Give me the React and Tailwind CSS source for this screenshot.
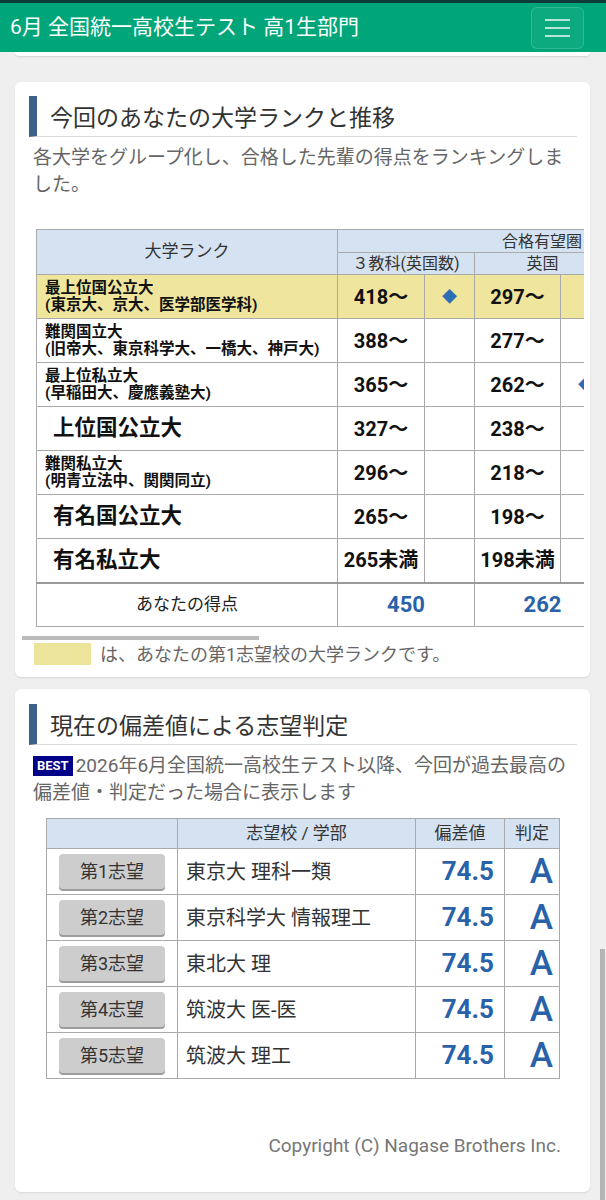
const ranks = [
  { name: "最上位国公立大", sub: "(東京大、京大、医学部医学科)", a: "418〜", b: "297〜", c: "301〜", markA: true, hl: true },
  { name: "難関国立大", sub: "(旧帝大、東京科学大、一橋大、神戸大)", a: "388〜", b: "277〜", c: "281〜" },
  { name: "最上位私立大", sub: "(早稲田大、慶應義塾大)", a: "365〜", b: "262〜", c: "266〜", markB: true },
  { name: "上位国公立大", a: "327〜", b: "238〜", c: "241〜" },
  { name: "難関私立大", sub: "(明青立法中、関関同立)", a: "296〜", b: "218〜", c: "220〜", markC: true },
  { name: "有名国公立大", a: "265〜", b: "198〜", c: "199〜" },
  { name: "有名私立大", a: "265未満", b: "198未満", c: "199未満" },
];

const choices = [
  { no: "第1志望", school: "東京大 理科一類", dev: "74.5", judge: "A" },
  { no: "第2志望", school: "東京科学大 情報理工", dev: "74.5", judge: "A" },
  { no: "第3志望", school: "東北大 理", dev: "74.5", judge: "A" },
  { no: "第4志望", school: "筑波大 医-医", dev: "74.5", judge: "A" },
  { no: "第5志望", school: "筑波大 理工", dev: "74.5", judge: "A" },
];

function Heading({ children }) {
  return (
    <div className="h-[41px] border-l-8 border-l-[#3e6189] border-b border-b-[#dcdcdc] flex items-center pl-[13px] pt-[6px] text-[23px] text-[#333]">
      {children}
    </div>
  );
}

function Mark({ on }) {
  return on ? <span className="text-[15px] text-[#2d6db5]">◆</span> : null;
}

function RankTable() {
  const cell = "border border-[#aaa] h-[44px] p-0";
  const num = cell + " text-center text-[20px] font-bold";
  const th = "border border-[#aaa] font-normal text-[16px] leading-[21px] p-0";
  return (
    <table className="ml-[14px] border-collapse table-fixed w-[709px] text-[#111]">
      <colgroup>
        <col className="w-[301px]" />
        <col className="w-[87px]" />
        <col className="w-[50px]" />
        <col className="w-[86px]" />
        <col className="w-[50px]" />
        <col className="w-[86px]" />
        <col className="w-[50px]" />
      </colgroup>
      <thead className="bg-[#d5e2f1] text-[#333]">
        <tr>
          <th rowSpan={2} className="border border-[#aaa] font-normal text-[17px] p-0">大学ランク</th>
          <th colSpan={6} className={th + " h-[23px]"}>合格有望圏</th>
        </tr>
        <tr>
          <th colSpan={2} className={th + " h-[22px]"}>３教科(英国数)</th>
          <th colSpan={2} className={th + " h-[22px]"}>英国</th>
          <th colSpan={2} className={th + " h-[22px]"}>英数</th>
        </tr>
      </thead>
      <tbody>
        {ranks.map((r, i) => (
          <tr key={r.name} className={r.hl ? "bg-[#efe59c]" : "bg-white"}>
            <td className={cell + " font-bold text-left" + (i === 0 ? " h-[43px]" : "")}>
              {r.sub ? (
                <div className="pl-2 text-[15.5px] leading-[17px]">
                  <div>{r.name}</div>
                  <div>{r.sub}</div>
                </div>
              ) : (
                <div className="pl-4 text-[21.5px]">{r.name}</div>
              )}
            </td>
            <td className={num}>{r.a}</td>
            <td className={cell + " text-center"}><Mark on={r.markA} /></td>
            <td className={num}>{r.b}</td>
            <td className={cell + " text-center"}><Mark on={r.markB} /></td>
            <td className={num}>{r.c}</td>
            <td className={cell + " text-center"}><Mark on={r.markC} /></td>
          </tr>
        ))}
        <tr className="bg-white">
          <td className="border border-[#aaa] border-t-2 border-t-[#999] h-[44px] text-center text-[17px] text-[#222]">あなたの得点</td>
          <td colSpan={2} className="border border-[#aaa] border-t-2 border-t-[#999] text-center text-[22px] font-bold text-[#2a62a9]">450</td>
          <td colSpan={2} className="border border-[#aaa] border-t-2 border-t-[#999] text-center text-[22px] font-bold text-[#2a62a9]">262</td>
          <td colSpan={2} className="border border-[#aaa] border-t-2 border-t-[#999] text-center text-[22px] font-bold text-[#2a62a9]">188</td>
        </tr>
      </tbody>
    </table>
  );
}

function ChoiceTable() {
  const cell = "border border-[#aaa] h-[46px] p-0";
  return (
    <table className="mx-auto w-[513px] border-collapse table-fixed">
      <colgroup>
        <col className="w-[131px]" />
        <col className="w-[238px]" />
        <col className="w-[89px]" />
        <col className="w-[55px]" />
      </colgroup>
      <thead className="bg-[#d5e2f1] text-[#333]">
        <tr>
          <th className="border border-[#aaa] h-[30px] p-0"></th>
          <th className="border border-[#aaa] font-normal text-[17px] p-0">志望校 / 学部</th>
          <th className="border border-[#aaa] font-normal text-[17px] p-0">偏差値</th>
          <th className="border border-[#aaa] font-normal text-[17px] p-0">判定</th>
        </tr>
      </thead>
      <tbody>
        {choices.map((c) => (
          <tr key={c.no}>
            <td className={cell}>
              <div className="mx-auto w-[106px] h-[35px] rounded-[4px] bg-[#cdcdcd] shadow-[0_2px_0_#9c9c9c] flex items-center justify-center text-[18px] text-[#333]">
                {c.no}
              </div>
            </td>
            <td className={cell + " pl-2 text-[20px] text-[#333]"}>{c.school}</td>
            <td className={cell + " pr-[10px] text-right text-[26px] font-bold text-[#2a62a9]"}>{c.dev}</td>
            <td className={cell + " pr-[6px] text-right text-[35px] font-medium text-[#2a62a9] leading-none"}>{c.judge}</td>
          </tr>
        ))}
      </tbody>
    </table>
  );
}

export default function App() {
  return (
    <div className="h-[1200px] overflow-hidden bg-[#efefef] font-[Roboto,'Noto_Sans_CJK_JP',sans-serif]">
      <div className="h-[3px] bg-[#0d3b3a]" />
      <div className="h-[49px] bg-[#00a67a] flex items-center justify-between pl-[10px] pr-[22px]">
        <div className="text-[21px] text-white">6月 全国統一高校生テスト 高1生部門</div>
        <div className="w-[53px] h-[42px] rounded-md border border-white/15 bg-white/5 flex flex-col items-center justify-center gap-[6px]">
          <span className="w-[25px] h-[2px] bg-white/70" />
          <span className="w-[25px] h-[2px] bg-white/70" />
          <span className="w-[25px] h-[2px] bg-white/70" />
        </div>
      </div>
      <div className="ml-[15px] mr-[16px] h-[4px] bg-white rounded-b-md shadow-[0_1px_2px_rgba(0,0,0,0.12)]" />

      <section className="mt-[26px] ml-[15px] mr-[16px] bg-white rounded-md shadow-[0_1px_2px_rgba(0,0,0,0.1)] pt-[14px] pl-[14px] pr-[13px] pb-[12px]">
        <Heading>今回のあなたの大学ランクと推移</Heading>
        <p className="mt-[7px] pl-1 text-[19px] leading-[27px] text-[#666]">
          各大学をグループ化し、合格した先輩の得点をランキングしました。
        </p>
        <div className="mt-[31px] -mx-[7px] overflow-hidden">
          <RankTable />
        </div>
        <div className="mt-[9px] -ml-[7px] w-[237px] h-[4px] bg-[#bbb]" />
        <div className="mt-[3px] h-[22px] flex items-center pl-[5px]">
          <span className="w-[57px] h-[22px] bg-[#ece49a]" />
          <span className="ml-[9px] text-[18px] text-[#666]">は、あなたの第1志望校の大学ランクです。</span>
        </div>
      </section>

      <section className="mt-[12px] ml-[15px] mr-[16px] bg-white rounded-md shadow-[0_1px_2px_rgba(0,0,0,0.1)] pt-[15px] pl-[14px] pr-[13px] pb-[33px]">
        <Heading>現在の偏差値による志望判定</Heading>
        <p className="mt-[7px] pl-1 text-[19px] leading-[27px] text-[#666]">
          <span className="inline-block h-[20px] leading-[20px] px-[4px] mr-[3px] bg-[#000088] text-white text-[13px] font-bold align-middle relative -top-[1px]">BEST</span>
          2026年6月全国統一高校生テスト以降、今回が過去最高の偏差値・判定だった場合に表示します
        </p>
        <div className="mt-[12px]">
          <ChoiceTable />
        </div>
        <div className="mt-[54px] pr-4 text-right text-[19px] leading-[26px] text-[#777]">
          Copyright (C) Nagase Brothers Inc.
        </div>
      </section>

      <div className="fixed right-[1px] top-[949px] w-[5px] h-[251px] bg-[#b4b4b4]" />
    </div>
  );
}
